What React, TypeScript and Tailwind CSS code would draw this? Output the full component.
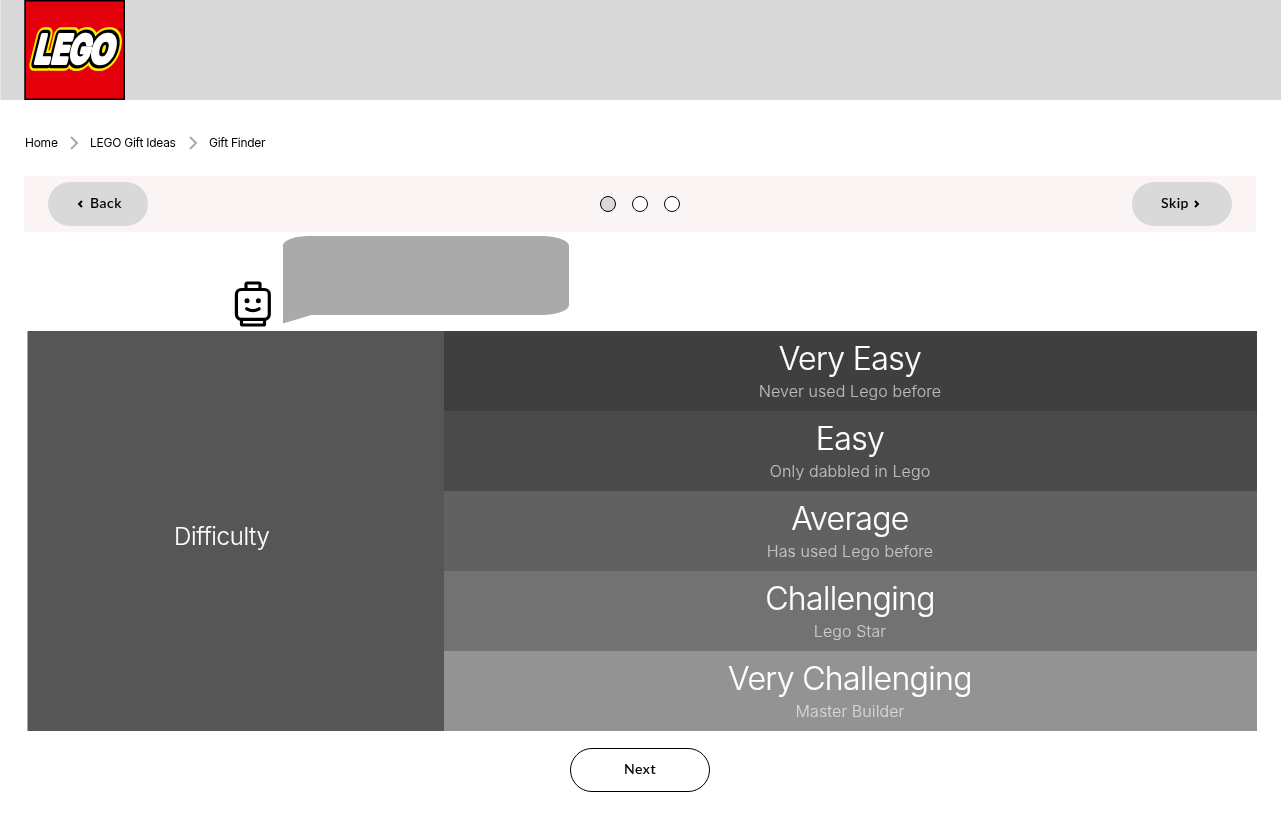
const levels = [
  { title: "Very Easy", note: "Never used Lego before", bg: "bg-[#3f3f3f]" },
  { title: "Easy", note: "Only dabbled in Lego", bg: "bg-[#4a4a4a]" },
  { title: "Average", note: "Has used Lego before", bg: "bg-[#616161]" },
  { title: "Challenging", note: "Lego Star", bg: "bg-[#727272]" },
  { title: "Very Challenging", note: "Master Builder", bg: "bg-[#939393]" },
];

const letters = [
  { c: "L", x: 9.5, w: 16 },
  { c: "E", x: 26.5, w: 17 },
  { c: "G", x: 43.5, w: 21 },
  { c: "O", x: 64.5, w: 24 },
];

function Letters({ color, stroke }: { color: string; stroke: number }) {
  return (
    <g fill={color} stroke={color} strokeWidth={stroke} strokeLinejoin="round">
      {letters.map((l) => (
        <text
          key={l.c}
          transform={`translate(${l.x} 63.3) skewX(-14)`}
          fontFamily="Inter, sans-serif"
          fontWeight="700"
          fontSize="38.5"
          textLength={l.w}
          lengthAdjust="spacingAndGlyphs"
        >
          {l.c}
        </text>
      ))}
    </g>
  );
}

function Logo() {
  return (
    <svg width="120" height="100" viewBox="0 0 120 100">
      <rect x="1" y="0.75" width="99.25" height="98.5" fill="#e3000b" stroke="#000" strokeWidth="1.5" />
      <Letters color="#ffed00" stroke={15.5} />
      <Letters color="#000" stroke={10.5} />
      <Letters color="#fff" stroke={3.8} />
      <text x="95" y="32" fontSize="5" fontFamily="Inter, sans-serif">®</text>
    </svg>
  );
}

function Crumb() {
  return (
    <svg className="ml-[13px] mr-[11px]" width="9" height="14" viewBox="0 0 9 14" fill="none" stroke="#aaa" strokeWidth="2">
      <path d="M1 1l6 6-6 6" />
    </svg>
  );
}

export default function App() {
  return (
    <div className="flex h-[832px] w-[1281px] flex-col overflow-hidden font-['Inter',sans-serif] text-black antialiased will-change-transform">
      <header className="h-[100px] shrink-0 border-l border-[#e8e8e8] bg-[#d9d9d9] pl-[23px]">
        <Logo />
      </header>
      <nav className="mt-[33px] flex h-5 shrink-0 items-center pl-[25px] text-xs tracking-[-0.25px]">
        <span className="w-8 whitespace-nowrap">Home</span>
        <Crumb />
        <span className="w-[86px] whitespace-nowrap">LEGO Gift Ideas</span>
        <Crumb />
        <span className="whitespace-nowrap">Gift Finder</span>
      </nav>
      <div className="ml-6 mt-[23px] flex h-14 w-[1232px] shrink-0 items-center justify-between bg-[#faf4f4] px-6 font-['Lato',sans-serif] text-sm font-medium [-webkit-text-stroke:0.1px_black]">
        <button className="flex h-11 w-[100px] items-center rounded-[22px] bg-[#d9d9d9] pl-[29px]">
          <svg className="mr-[7px]" width="6" height="8" viewBox="0 0 6 8" fill="none" stroke="#000" strokeWidth="2">
            <path d="M5 1L2 4l3 3" />
          </svg>
          <span className="-mt-0.5 tracking-[0.5px]">Back</span>
        </button>
        <div className="flex gap-4">
          <span className="size-4 rounded-full border border-black bg-[#d9d9d9]" />
          <span className="size-4 rounded-full border border-black bg-white" />
          <span className="size-4 rounded-full border border-black bg-white" />
        </div>
        <button className="flex h-11 w-[100px] items-center rounded-[22px] bg-[#d9d9d9] pl-[29px]">
          <span className="-mt-0.5 tracking-[0.5px]">Skip</span>
          <svg className="ml-[5px]" width="6" height="8" viewBox="0 0 6 8" fill="none" stroke="#000" strokeWidth="2">
            <path d="M1 1l3 3-3 3" />
          </svg>
        </button>
      </div>
      <div className="flex h-[99px] shrink-0 pl-[234px]">
        <svg className="mt-[49px]" width="38" height="47" viewBox="0 0 38 47" fill="none" stroke="#000" strokeWidth="3.2" strokeLinecap="round" strokeLinejoin="round">
          <rect x="2.4" y="8.5" width="32.9" height="29.8" rx="5" />
          <path d="M12 8V3.2q0-1.2 1.200-1.200h11.600q1.200 0 1.200 1.200V8M7.500 38.500v4.500q0 1 1 1h21q1 0 1-1v-4.500M12.700 27.800q6.200 3.800 12.400 0" />
          <circle cx="13" cy="19.700" r="2.500" fill="#000" stroke="none" />
          <circle cx="24.400" cy="19.700" r="2.500" fill="#000" stroke="none" />
        </svg>
        <svg className="ml-[11px] mt-1" width="286" height="88" viewBox="0 0 286 88">
          <path d="M0 10C0 4 12 0 27 0H258C274 0 286 4.500 286 10V69C286 74.500 274 79 258 79H28.500L0 87.500Z" fill="#aaa" />
        </svg>
      </div>
      <main className="ml-[27px] flex h-[400px] w-[1229.5px] shrink-0 border-l border-[#a6a6a6] text-white">
        <section className="flex w-[415.5px] items-center bg-[#565656] pl-[146px]">
          <p className="mt-[11px] whitespace-nowrap text-2xl font-light tracking-[-0.35px] [-webkit-text-stroke:0.15px_white] [font-variant-ligatures:none]">
            Difficulty
          </p>
        </section>
        <div className="flex flex-1 flex-col">
          {levels.map((l) => (
            <section key={l.title} className={`flex h-20 flex-col items-center ${l.bg}`}>
              <h2 className="mt-2 h-10 text-[32px] leading-10 font-light tracking-[-0.65px] [-webkit-text-stroke:0.2px_white]">{l.title}</h2>
              <p className="h-6 text-base leading-6 font-light tracking-[0.09px] text-white/60 [-webkit-text-stroke:0.1px_rgba(255,255,255,0.6)]">{l.note}</p>
            </section>
          ))}
        </div>
      </main>
      <button className="ml-[570px] mt-[17px] h-11 w-[140px] shrink-0 rounded-[22px] border border-black bg-white pb-0.5 font-['Lato',sans-serif] text-sm font-medium tracking-[0.5px] [-webkit-text-stroke:0.1px_black]">
        Next
      </button>
    </div>
  );
}
